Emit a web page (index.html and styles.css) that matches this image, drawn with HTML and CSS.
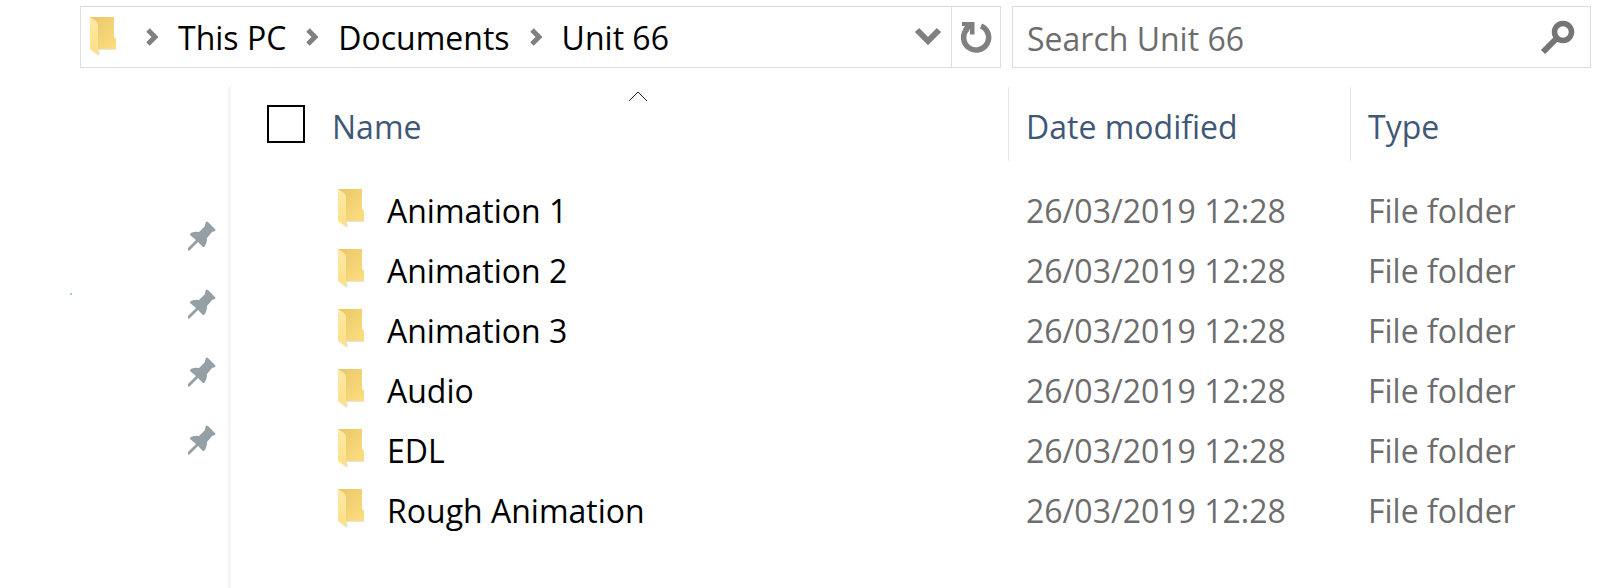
FILE: index.html
```html
<!DOCTYPE html>
<html lang="en">
<head>
    <meta charset="utf-8">
    <title>Unit 66</title>
    <link rel="stylesheet" href="styles.css">
</head>
<body>
    <!-- shared icons -->
    <svg class="sprite" aria-hidden="true">
        <defs>
            <linearGradient id="back" x1="0" y1="0" x2="1" y2="1">
                <stop offset="0" stop-color="#e9c566"/>
                <stop offset="1" stop-color="#fddf80"/>
            </linearGradient>
            <linearGradient id="flap" x1="0" y1="0" x2="0" y2="1">
                <stop offset="0" stop-color="#ffe9a6"/>
                <stop offset="1" stop-color="#ffdf87"/>
            </linearGradient>
        </defs>
        <symbol id="folder" viewBox="0 0 28 40">
            <path d="M7 32h20l-1 1H9l1 4-2 2z" fill="#e6e3dc"/>
            <path d="M0 0h24v20l2 2v10H6L0 4z" fill="url(#back)"/>
            <path d="M0 0l6 4q2 1.500 2 4v30L0 32z" fill="url(#flap)"/>
        </symbol>
        <symbol id="chevron" viewBox="0 0 12 18">
            <path d="M2 2l7 7-7 7" fill="none" stroke="#808080" stroke-width="5"/>
        </symbol>
        <symbol id="pin" viewBox="0 0 30 30">
            <path d="M20 1q1-1 2 0l7 7q1 1 0 2l-3 1-5 6q0 6-3 9l-1 0-5-5-8 8-2 1 0-3 8-8-6-5q0-1 1-2 4-2 8-1l6-6q0-2 1-4z" fill="#95a0a6"/>
        </symbol>
    </svg>

    <div class="toolbar">
        <nav class="address" aria-label="Address">
            <svg class="folder"><use href="#folder"/></svg>
            <svg class="chevron"><use href="#chevron"/></svg>
            <a href="#pc">This PC</a>
            <svg class="chevron"><use href="#chevron"/></svg>
            <a href="#documents">Documents</a>
            <svg class="chevron"><use href="#chevron"/></svg>
            <a href="#unit66">Unit 66</a>
            <button class="history" aria-label="Previous locations">
                <svg width="28" height="20" viewBox="0 0 28 20"><path d="M3 3l11 11L25 3" fill="none" stroke="#808080" stroke-width="6"/></svg>
            </button>
            <button class="refresh" aria-label="Refresh">
                <svg width="32" height="32" viewBox="0 0 32 32">
                    <path d="M21 5A12.500 12.500 0 1 1 7 8" fill="none" stroke="#808080" stroke-width="5.500"/>
                    <path d="M2 1h12.500v12.500h-4.500V8l-2 3-5-3 2-3H2z" fill="#808080"/>
                </svg>
            </button>
        </nav>
        <div class="search">
            <input type="text" placeholder="Search Unit 66" aria-label="Search Unit 66">
            <svg width="36" height="36" viewBox="0 0 36 36">
                <circle cx="23" cy="13" r="8.500" fill="none" stroke="#757575" stroke-width="5.500"/>
                <path d="M17 19L3 33" stroke="#757575" stroke-width="6"/>
            </svg>
        </div>
    </div>

    <div class="content">
        <aside class="sidebar">
            <span class="dot"></span>
            <svg><use href="#pin"/></svg>
            <svg><use href="#pin"/></svg>
            <svg><use href="#pin"/></svg>
            <svg><use href="#pin"/></svg>
        </aside>

        <main>
            <table>
                <thead>
                    <tr>
                        <th class="name">
                            <svg class="sort" width="18" height="10" viewBox="0 0 18 10"><path d="M0 10l9-9 9 9" fill="none" stroke="#222"/></svg>
                            <div class="select-all">
                                <input type="checkbox" id="all" aria-label="Select all">
                                <label for="all">Name</label>
                            </div>
                        </th>
                        <th class="date">Date modified</th>
                        <th class="type">Type</th>
                    </tr>
                </thead>
                <tbody>
                    <tr>
                        <td><div class="file"><svg class="folder"><use href="#folder"/></svg>Animation 1</div></td>
                        <td>26/03/2019 12:28</td>
                        <td>File folder</td>
                    </tr>
                    <tr>
                        <td><div class="file"><svg class="folder"><use href="#folder"/></svg>Animation 2</div></td>
                        <td>26/03/2019 12:28</td>
                        <td>File folder</td>
                    </tr>
                    <tr>
                        <td><div class="file"><svg class="folder"><use href="#folder"/></svg>Animation 3</div></td>
                        <td>26/03/2019 12:28</td>
                        <td>File folder</td>
                    </tr>
                    <tr>
                        <td><div class="file"><svg class="folder"><use href="#folder"/></svg>Audio</div></td>
                        <td>26/03/2019 12:28</td>
                        <td>File folder</td>
                    </tr>
                    <tr>
                        <td><div class="file"><svg class="folder"><use href="#folder"/></svg>EDL</div></td>
                        <td>26/03/2019 12:28</td>
                        <td>File folder</td>
                    </tr>
                    <tr>
                        <td><div class="file"><svg class="folder"><use href="#folder"/></svg>Rough Animation</div></td>
                        <td>26/03/2019 12:28</td>
                        <td>File folder</td>
                    </tr>
                </tbody>
            </table>
        </main>
    </div>
</body>
</html>
```

FILE: styles.css
```css
* {
    box-sizing: border-box;
}
body {
    margin: 0;
    min-height: 100vh;
    display: flex;
    flex-direction: column;
    background: #fff;
    color: #000;
    font-family: "Segoe UI", "Open Sans", "Noto Sans", sans-serif;
    font-size: 32px;
    line-height: 44px;
}
svg {
    display: block;
    flex: none;
}
.sprite {
    position: absolute;
    width: 0;
    height: 0;
}
.folder {
    width: 28px;
    height: 40px;
}
.chevron {
    width: 12px;
    height: 18px;
    margin: 0 20px;
}

/* address bar and search */
.toolbar {
    display: grid;
    grid-template-columns: 921fr 579fr;
    gap: 11px;
    padding: 6px 9px 0 80px;
}
.address,
.search {
    display: flex;
    align-items: center;
    height: 62px;
    border: 1px solid #dcdcdc;
}
.address {
    padding-left: 9px;
}
.address a {
    padding-top: 2px;
    color: #000;
    text-decoration: none;
    white-space: nowrap;
}
.address .folder + .chevron {
    margin-left: 28px;
}
button {
    display: flex;
    align-items: center;
    justify-content: center;
    height: 100%;
    padding: 0;
    border: none;
    background: none;
}
.history {
    width: 46px;
    margin-left: auto;
}
.refresh {
    width: 49px;
    border-left: 1px solid #dcdcdc;
}
.search {
    padding: 0 14px;
}
.search input {
    flex: 1;
    min-width: 0;
    padding: 4px 0 0;
    border: none;
    outline: none;
    background: none;
    font: inherit;
}
.search input::placeholder {
    color: #6d6d6d;
    opacity: 1;
}

/* pinned folders */
.content {
    flex: 1;
    display: flex;
    padding-top: 19px;
}
.sidebar {
    position: relative;
    width: 231px;
    display: flex;
    flex-direction: column;
    align-items: flex-end;
    gap: 38px;
    padding: 134px 12px 0 0;
    border-right: 3px solid #f5f5f5;
}
.sidebar svg {
    width: 30px;
    height: 30px;
}
.dot {
    position: absolute;
    top: 206px;
    left: 70px;
    width: 2px;
    height: 2px;
    background: #8fd3e6;
}

/* file list */
main {
    flex: 1;
    padding-left: 36px;
}
table {
    width: 100%;
    table-layout: fixed;
    border-collapse: separate;
    border-spacing: 0;
}
th {
    position: relative;
    height: 74px;
    padding: 6px 0 0 17px;
    border-left: 1px solid #e5e5e5;
    color: #3f5876;
    font-weight: 400;
    text-align: left;
}
th.name {
    padding-left: 0;
    border-left: none;
}
th.date {
    width: 342px;
}
th.type {
    width: 250px;
}
.sort {
    position: absolute;
    top: 4px;
    left: 50%;
    margin-left: -9px;
}
.select-all {
    display: flex;
    align-items: center;
    gap: 27px;
}
.select-all input {
    appearance: none;
    width: 38px;
    height: 38px;
    margin: 0 0 6px;
    border: 2px solid #000;
}
.select-all input:checked {
    background: #0078d7;
}
td {
    height: 60px;
    padding: 0 0 0 18px;
    color: #6d6d6d;
}
td:first-child {
    padding-left: 71px;
    color: #000;
}
tbody::before {
    content: "";
    display: block;
    height: 20px;
}
.file {
    display: flex;
    align-items: center;
    gap: 21px;
}
.file .folder {
    margin-bottom: 4px;
}
```
